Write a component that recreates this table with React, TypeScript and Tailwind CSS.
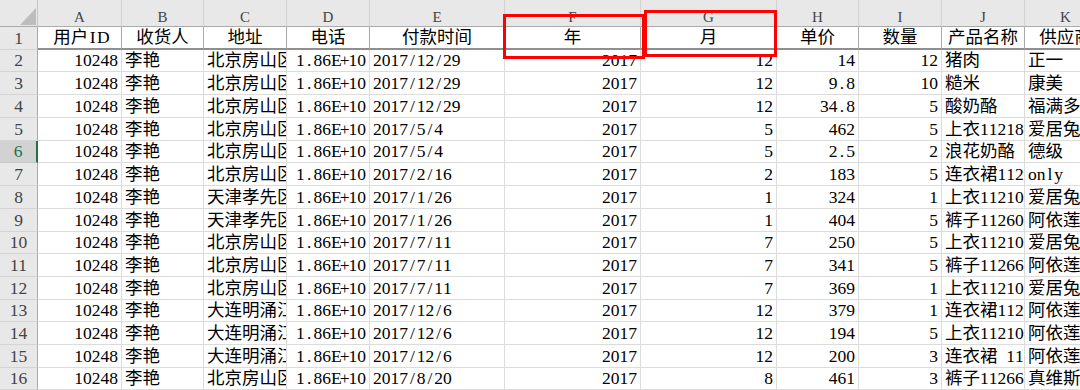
const LETTERS = ['A', 'B', 'C', 'D', 'E', 'F', 'G', 'H', 'I', 'J', 'K'];
const HEAD = ['用户ID', '收货人', '地址', '电话', '付款时间', '年', '月', '单价', '数量', '产品名称', '供应商'];
const RIGHT = [true, false, false, true, false, true, true, true, true, false, false];

const ROWS: string[][] = [
  ['10248', '李艳', '北京房山区长阳', '1.86E+10', '2017/12/29', '2017', '12', '14', '12', '猪肉', '正一'],
  ['10248', '李艳', '北京房山区长阳', '1.86E+10', '2017/12/29', '2017', '12', '9.8', '10', '糙米', '康美'],
  ['10248', '李艳', '北京房山区长阳', '1.86E+10', '2017/12/29', '2017', '12', '34.8', '5', '酸奶酪', '福满多'],
  ['10248', '李艳', '北京房山区长阳', '1.86E+10', '2017/5/4', '2017', '5', '462', '5', '上衣112180', '爱居兔'],
  ['10248', '李艳', '北京房山区长阳', '1.86E+10', '2017/5/4', '2017', '5', '2.5', '2', '浪花奶酪', '德级'],
  ['10248', '李艳', '北京房山区长阳', '1.86E+10', '2017/2/16', '2017', '2', '183', '5', '连衣裙1120', 'only'],
  ['10248', '李艳', '天津孝先区', '1.86E+10', '2017/1/26', '2017', '1', '324', '1', '上衣112100', '爱居兔'],
  ['10248', '李艳', '天津孝先区', '1.86E+10', '2017/1/26', '2017', '1', '404', '5', '裤子112600', '阿依莲'],
  ['10248', '李艳', '北京房山区长阳', '1.86E+10', '2017/7/11', '2017', '7', '250', '5', '上衣112100', '爱居兔'],
  ['10248', '李艳', '北京房山区长阳', '1.86E+10', '2017/7/11', '2017', '7', '341', '5', '裤子112660', '阿依莲'],
  ['10248', '李艳', '北京房山区长阳', '1.86E+10', '2017/7/11', '2017', '7', '369', '1', '上衣112100', '爱居兔'],
  ['10248', '李艳', '大连明涌江', '1.86E+10', '2017/12/6', '2017', '12', '379', '1', '连衣裙1120', '阿依莲'],
  ['10248', '李艳', '大连明涌江', '1.86E+10', '2017/12/6', '2017', '12', '194', '5', '上衣112100', '阿依莲'],
  ['10248', '李艳', '大连明涌江', '1.86E+10', '2017/12/6', '2017', '12', '200', '3', '连衣裙 11', '阿依莲'],
  ['10248', '李艳', '北京房山区长阳', '1.86E+10', '2017/8/20', '2017', '8', '461', '3', '裤子112660', '真维斯'],
];

// half-width chars get a fixed 0.5em box, like a CJK system font
function Txt({ s }: { s: string }) {
  return (
    <>
      {Array.from(s).map((c, i) =>
        c.charCodeAt(0) < 128 ? (
          <span key={i} className="inline-block w-[0.5em] text-center">
            {c === ' ' ? '\u00a0' : c}
          </span>
        ) : (
          <span key={i}>{c}</span>
        )
      )}
    </>
  );
}

function Corner() {
  return (
    <div className="border-r border-b border-r-[#c6c6c6] border-b-[#ababab] bg-[#e8e8e8]">
      <svg width="37" height="26" viewBox="0 0 37 26">
        <polygon points="20,25 36,25 36,8" fill="#bdbdbd" />
      </svg>
    </div>
  );
}

export default function App() {
  return (
    <div className="relative h-[390px] w-[1080px] overflow-hidden bg-white font-['Liberation_Serif','Noto_Sans_CJK_SC',serif] text-[17.5px] text-black">
      <div className="grid w-[1107px] grid-cols-[38px_84px_82px_83px_83px_135px_136px_136px_82px_83px_83px_82px] grid-rows-[27px_23px_22px_23px_23px_23px_22px_23px_23px_23px_22px_23px_23px_22px_23px_23px_22px]">
        <Corner />
        {LETTERS.map((l) => (
          <div
            key={l}
            className="flex justify-center border-r border-b border-r-[#d4d4d4] border-b-[#ababab] bg-[#e8e8e8] pt-[10px] text-[15px] leading-none text-[#444]"
          >
            {l}
          </div>
        ))}

        <div className="flex items-center justify-center border-r border-b border-r-[#ababab] border-b-[#d4d4d4] bg-[#e8e8e8] text-[#444]">
          1
        </div>
        {HEAD.map((h) => (
          <div
            key={h}
            className="flex items-center justify-center overflow-hidden whitespace-nowrap border-r border-b-2 border-r-[#a8a8a8] border-b-[#8f8f8f] px-[3px]"
          >
            <Txt s={h} />
          </div>
        ))}

        {ROWS.map((row, r) => {
          const n = r + 2;
          const sel = n === 6;
          return [
            <div
              key={'h' + n}
              className={
                sel
                  ? 'flex items-center justify-center border-r-2 border-b border-r-[#217346] border-b-[#c6c6c6] bg-[#d2d2d2] text-[#217346]'
                  : 'flex items-center justify-center border-r border-b border-r-[#ababab] border-b-[#d4d4d4] bg-[#e8e8e8] text-[#444]'
              }
            >
              {n}
            </div>,
            ...row.map((v, c) => (
              <div
                key={n + '-' + c}
                className={
                  RIGHT[c]
                    ? 'flex items-center justify-end overflow-hidden whitespace-nowrap border-r border-b border-[#dcdcdc] pr-[3px]'
                    : 'flex items-center justify-start overflow-hidden whitespace-nowrap border-r border-b border-[#dcdcdc] pl-[3px]'
                }
              >
                <Txt s={v} />
              </div>
            )),
          ];
        })}
      </div>

      {/* red annotation boxes */}
      <div className="absolute left-[503px] top-[14px] h-[45px] w-[142px] border-[3px] border-[#ff0000]" />
      <div className="absolute left-[644px] top-[10px] h-[47px] w-[133px] border-[3px] border-[#ff0000]" />
    </div>
  );
}
